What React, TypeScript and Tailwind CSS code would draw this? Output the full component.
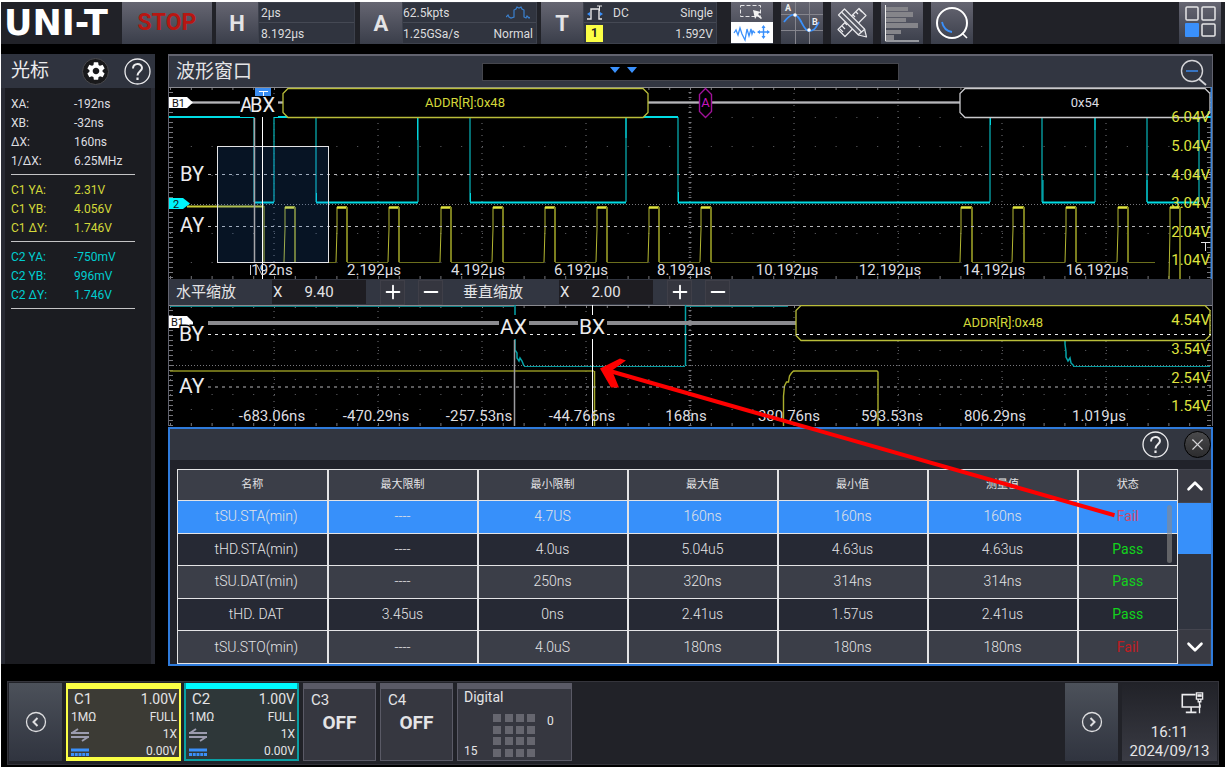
import { useState, type ReactNode } from "react";
import { ChevronDown, ChevronUp, Minus, Plus, X } from "lucide-react";
import { MdSettings } from "react-icons/md";

const GRID_X = [274, 378, 482, 586, 690, 794, 898, 1002, 1106];

const TILE = "bg-linear-to-b from-[#666672] to-[#3a3e4a]";

/* ---------- top bar ---------- */

function Setting({ letter, className, children }: { letter: string; className: string; children: ReactNode }) {
  return (
    <section className={`flex h-full ${className}`}>
      <button className={`h-full w-[42px] shrink-0 text-[22px] font-bold text-[#e4e4e6] ${TILE}`}>{letter}</button>
      <div className="grid flex-1 grid-rows-2 divide-y divide-[#454954] border border-[#3d414c] bg-[#30343f] text-xs text-[#dcdcde]">
        {children}
      </div>
    </section>
  );
}

function ToolButton({ label, children }: { label: string; children: ReactNode }) {
  return (
    <button aria-label={label} className={`h-full w-[42px] shrink-0 overflow-hidden ${TILE}`}>
      <svg viewBox="0 0 42 42" className="block h-[42px] w-[42px]" fill="none">
        {children}
      </svg>
    </button>
  );
}

function TopBar() {
  return (
    <header className="flex h-[42px] items-center bg-[#212228] pr-1">
      <h1 className="w-[121px] pl-[3px] font-['DejaVu_Sans',sans-serif] text-[35px] leading-[42px] font-bold text-white">
        UNI-T
      </h1>
      <button className={`h-full w-[90px] text-[23px] font-bold text-[#b81612] ${TILE}`}>STOP</button>
      <Setting letter="H" className="ml-1 w-[139px]">
        <p className="flex items-center px-[2px] pt-px">2µs</p>
        <p className="flex items-center px-[2px] pt-px">8.192µs</p>
      </Setting>
      <Setting letter="A" className="ml-[5px] w-[177px]">
        <p className="flex items-center justify-between pt-px pr-[2px]">
          62.5kpts
          <svg viewBox="0 0 24 14" className="mr-1 h-[14px] w-6" fill="none" stroke="#3a80cf" strokeWidth="1.200">
            <path d="M0 11l2-2 1 2 2 1 3-1V4l2-1 1-2 2 1 2-1 1 2 2 1v7l2 1 1-2 2 2 2-1" />
          </svg>
        </p>
        <p className="flex items-center justify-between pt-px pr-[3px]">
          1.25GSa/s <span>Normal</span>
        </p>
      </Setting>
      <Setting letter="T" className="ml-1 w-[176px]">
        <p className="flex items-center pt-px pr-[3px] pl-[3px]">
          <svg viewBox="0 0 16 16" className="h-4 w-4" fill="none">
            <path d="M0 14h4V4h8v10h3" stroke="#e4e4e6" strokeWidth="1.4" />
            <path d="M0 9l3-2v4zM16 9l-3-2v4z" fill="#3a90fb" />
            <path d="M10 1h5M12.500 1v5" stroke="#e4e4e6" />
          </svg>
          <span className="ml-[10px]">DC</span>
          <span className="ml-auto">Single</span>
        </p>
        <p className="flex items-center justify-between pt-px pr-[3px] pl-[2px]">
          <span className="w-[17px] bg-[#fbff45] text-center leading-[17px] font-bold text-[#222]">1</span>
          1.592V
        </p>
      </Setting>
      <nav className="ml-[14px] flex h-full gap-2">
        <ToolButton label="Select area or move waveform">
          <rect y="20" width="42" height="21" fill="#fff" />
          <rect x="9.500" y="3.500" width="20" height="11" stroke="#e4e4e6" strokeDasharray="4 2" />
          <path d="M22 8l2 9 2-3 4 3 1-1-4-4 3-2z" fill="#f2f2f2" />
          <path d="M3 31l2-3 2 5 2-7 2 6 3 6 2-11 2 7 2-7 1 5 1-3 2 2" stroke="#3a90fb" strokeWidth="1.300" />
          <path d="M27 30h11M32.500 24v12" stroke="#3a90fb" strokeWidth="1.400" />
          <path d="M26 30l3-2v4zM39 30l-3-2v4zM32.500 23l2 3h-4zM32.500 37l2-3h-4z" fill="#3a90fb" />
        </ToolButton>
        <ToolButton label="Cursors">
          <path d="M14.500 0v42M28.500 0v42M0 12.500h42M0 28.500h42" stroke="#85858d" />
          <path d="M3 20C9 12 14 11 17 15c4 4 6 14 11 14 6 0 7-4 10-9" stroke="#3a90fb" strokeWidth="1.800" />
          <circle cx="14" cy="13" r="1.800" fill="#fff" />
          <circle cx="28" cy="28" r="1.800" fill="#fff" />
          <text x="4" y="9" fontSize="9" fontWeight="700" fill="#eee">A</text>
          <text x="31" y="23" fontSize="9" fontWeight="700" fill="#eee">B</text>
        </ToolButton>
        <ToolButton label="Measure">
          <g stroke="#e9e9ec" strokeWidth="1.200" strokeLinejoin="round">
            <path d="M28 6.500l7 7-21 21-7-7z" />
            <path d="M25 10l2 2M28 7l3 3M22 13l2 2M11 24l3 3M14 21l2 2M9 27l3 3" />
            <path d="M7.500 13l6-6 20 20 2 8-8-2z" fill="#565964" />
            <path d="M10.500 10l20 20M27 33l7-6" />
          </g>
        </ToolButton>
        <ToolButton label="Statistics">
          <path d="M5 5h22v4H5zM5 10h27v5H5zM5 16h20v4H5zM5 21h32v5H5zM5 28h15v4H5zM5 33h8v5H5z" fill="#85858a" />
          <path d="M4.500 3v36H38" stroke="#f0f0f0" />
        </ToolButton>
        <ToolButton label="Search">
          <circle cx="21" cy="21" r="15" stroke="#fff" strokeWidth="2" />
          <path d="M11 20c1 5 4 9 10 10" stroke="#3a90fb" strokeWidth="1.800" />
          <path d="M31 31l5 5" stroke="#fff" strokeWidth="1.600" />
        </ToolButton>
      </nav>
      <div className="ml-auto h-full">
        <ToolButton label="Window layout">
          <g stroke="#e6e6e8" strokeWidth="1.500">
            <rect x="7" y="5" width="12" height="13" rx="1" />
            <rect x="23" y="5" width="13" height="13" rx="1" />
            <rect x="23" y="22" width="13" height="12" rx="1" />
          </g>
          <rect x="6" y="21" width="14" height="14" rx="1" fill="#3a90fb" />
        </ToolButton>
      </div>
    </header>
  );
}

/* ---------- cursor sidebar ---------- */

function HelpButton() {
  return (
    <button aria-label="Help" className="h-[27px] w-[27px] shrink-0">
      <svg viewBox="0 0 27 27" fill="none" stroke="#ececee">
        <circle cx="13.500" cy="13.500" r="12.500" strokeWidth="1.300" />
        <path d="M9 10.500c0-6 9-6 9-.5 0 3-4.500 3.500-4.500 7.500" strokeWidth="2" />
        <path d="M13.500 19.500v2.500" strokeWidth="2.200" />
      </svg>
    </button>
  );
}

const READINGS = [
  { color: "text-[#dedee0]", rows: [["XA:", "-192ns"], ["XB:", "-32ns"], ["ΔX:", "160ns"], ["1/ΔX:", "6.25MHz"]] },
  { color: "text-[#d3d83a]", rows: [["C1 YA:", "2.31V"], ["C1 YB:", "4.056V"], ["C1 ΔY:", "1.746V"]] },
  { color: "text-[#00cdd0]", rows: [["C2 YA:", "-750mV"], ["C2 YB:", "996mV"], ["C2 ΔY:", "1.746V"]] },
];

function Sidebar() {
  return (
    <aside className="mb-[2px] flex w-[154px] shrink-0 flex-col bg-[#282a33]">
      <header className="flex h-[34px] items-center bg-[#2f333e] pr-1 pl-[10px]">
        <h2 className="text-[19px] text-[#ececee]">光标</h2>
        <button
          aria-label="Cursor settings"
          className="mr-[15px] ml-auto grid h-[27px] w-[27px] place-items-center rounded-full border border-[#4a4a4e] bg-[#19191b] text-white"
        >
          <MdSettings size={22} />
        </button>
        <HelpButton />
      </header>
      <div className="mx-1 flex-1 bg-[#1b1c21] px-[6px] pt-[7px]">
        {READINGS.map((group) => (
          <dl key={group.color} className={`mb-[6px] w-[124px] border-b border-[#c4c4c6] pb-[3px] text-xs leading-[19px] ${group.color}`}>
            {group.rows.map(([name, value]) => (
              <div key={name} className="flex">
                <dt className="w-[63px]">{name}</dt>
                <dd>{value}</dd>
              </div>
            ))}
          </dl>
        ))}
      </div>
    </aside>
  );
}

/* ---------- waveforms ---------- */

function Graticule({ top, bottom, mid, rows }: { top: number; bottom: number; mid: number; rows: number[] }) {
  return (
    <g stroke="#77777c" fill="none">
      {GRID_X.map((x) => (
        <path key={x} d={`M${x} ${top}V${bottom}`} strokeDasharray="1 5" />
      ))}
      {rows.map((y) => (
        <path key={y} d={`M170 ${y}H1210`} strokeDasharray="1 19.800" stroke="#66666b" />
      ))}
      <path d={`M170 ${mid}H1210`} strokeDasharray="1 2" />
      <path d={`M690 ${top}V${bottom}`} strokeWidth="3" strokeDasharray="1 4" />
      <path d={`M171 ${top}V${bottom}M1209 ${top}V${bottom}`} strokeWidth="4" strokeDasharray="1 4" />
      <path d={`M170 ${top + 1.5}H1210M170 ${bottom - 1.5}H1210`} strokeWidth="3" strokeDasharray="1 19.800" />
      <path d={`M169 ${top + 0.5}H1212`} stroke="#8a8a90" />
    </g>
  );
}

const PULSES: [number, number][] = [
  [285, 295], [337, 347], [389, 399], [441, 451], [493, 503], [545, 555], [597, 607], [649, 659],
  [701, 711], [961, 972], [1013, 1024], [1066, 1076], [1118, 1128], [1170, 1180],
];

const CYAN_LEVELS = [
  { y: 117, spans: [[169, 254], [274, 316], [418, 470], [626, 678], [990, 1042], [1095, 1147], [1199, 1211]] },
  { y: 202.5, spans: [[254, 274], [316, 418], [470, 626], [678, 990], [1042, 1095], [1147, 1199]] },
];

const CYAN_EDGES = [254, 274, 316, 418, 470, 626, 678, 990, 1042, 1095, 1147, 1199];

const MAIN_TIMES: [number, string][] = [
  [374, "2.192µs"], [478, "4.192µs"], [581, "6.192µs"], [684, "8.192µs"],
  [787, "10.192µs"], [890, "12.192µs"], [994, "14.192µs"], [1097, "16.192µs"],
];

const MAIN_VOLTS: [number, string][] = [
  [122, "6.04V"], [151, "5.04V"], [180, "4.04V"], [208, "3.04V"], [237, "2.04V"], [265, "1.04V"],
];

function MainChart() {
  return (
    <svg viewBox="169 87 1043 192" className="block h-auto w-full bg-black" fill="none" role="img" aria-label="Main waveform">
      <Graticule top={87} bottom={279} mid={204.5} rows={[117.5, 146.5, 175.5, 233.5, 262.5]} />

      {CYAN_EDGES.map((x) => (
        <path key={x} d={`M${x} 117V202`} stroke="#06898d" strokeWidth="1.600" />
      ))}
      {CYAN_LEVELS.map((level) =>
        level.spans.map(([a, b]) => <path key={`${level.y}-${a}`} d={`M${a} ${level.y}H${b}`} stroke="#00dce4" strokeWidth="2" />),
      )}
      <path d="M316.500 193v9M470.500 193v9M678.500 192v10M417.500 118v22M626 118v20M990.500 125v-7M1095 130v-12M1043 180v22M1147 180v22" stroke="#00d4dc" />

      <path d="M187 206.500H264" stroke="#c9cd38" strokeWidth="2" />
      <path d="M264 206V262" stroke="#7b7e1e" strokeWidth="1.600" />
      {PULSES.map(([a, b], i) => {
        const foot = i === PULSES.length - 1 ? 279 : 262;
        return (
          <g key={a}>
            <path d={`M${a - 1} ${foot}L${a} 229V207`} stroke="#b4b832" />
            <path d={`M${a} 207.500H${b}`} stroke="#dfe33e" strokeWidth="2.500" />
            <path d={`M${b} 207V${foot}`} stroke="#7b7e1e" strokeWidth="2" />
          </g>
        );
      })}
      <path
        d="M295 262.500H336M347 262.500H388M399 262.500H440M451 262.500H492M503 262.500H544M555 262.500H596M607 262.500H648M659 262.500H700M711 262.500H960M972 262.500H1012M1024 262.500H1065M1076 262.500H1117M1128 262.500H1155"
        stroke="#6c6f1d"
      />

      <path d="M208 174.500H1211M208 226.500H1211" stroke="#b5b5b8" strokeDasharray="3 4" />
      <path d="M190 102.500H960" stroke="#77777b" strokeWidth="3" />
      <path d="M190 102.500H960" stroke="#b5b5b8" />

      <path d="M288 88.500H643l5 5v19l-5 5H288l-5-5v-19z" fill="#000" stroke="#b9bd3a" strokeWidth="1.300" />
      <path d="M705.500 88.500l6 6v17l-6 6-6-6v-17z" fill="#000" stroke="#a0129a" strokeWidth="1.400" />
      <path d="M965 88.500h240l5 5v19l-5 5H965l-5-5v-19z" fill="#000" stroke="#c9c9cc" strokeWidth="1.300" />
      <g fontSize="13" textAnchor="middle">
        <text x="465" y="107" fill="#d3d83a">ADDR[R]:0x48</text>
        <text x="705.500" y="107" fill="#c715bf">A</text>
        <text x="1085" y="107" fill="#dedee0">0x54</text>
      </g>

      <rect x="217.500" y="146.500" width="111" height="116" fill="#2a7fe0" fillOpacity="0.16" stroke="#e4e4e6" />
      <path d="M254.500 118V262" stroke="#a5a5a9" strokeWidth="1.500" />
      <rect x="255" y="88" width="16" height="8" fill="#3a8df2" />
      <path d="M259 91.500h9M263.500 91v5" stroke="#fff" />
      <path d="M262.500 96V279" stroke="#fff" />
      <rect x="240" y="97" width="38" height="20" fill="#000" />
      <g fill="#ececee" fontSize="20">
        <text x="240" y="112">A</text>
        <text x="250" y="112" stroke="#000" strokeWidth="2" paintOrder="stroke">BX</text>
        <text x="180" y="181">BY</text>
        <text x="180" y="232">AY</text>
      </g>

      <path d="M169 97h18l6 5.500-6 5.500H169z" fill="#fff" />
      <path d="M169 198h14l7 5.500-7 5.500H169z" fill="#00f4fa" />
      <g fontSize="11" fill="#111">
        <text x="172" y="107">B1</text>
        <text x="173" y="208">2</text>
      </g>

      <g fontSize="15" fill="#dedee0" textAnchor="middle">
        <text x="272" y="275">192ns</text>
        {MAIN_TIMES.map(([x, label]) => (
          <text key={label} x={x} y="275">{label}</text>
        ))}
      </g>
      <g fontSize="15" fill="#dfe33e" textAnchor="end">
        {MAIN_VOLTS.map(([y, label]) => (
          <text key={label} x="1210" y={y}>{label}</text>
        ))}
      </g>
      <path d="M1201 242.500h9M1205.500 242v9" stroke="#e4e4e6" />
      <path d="M250.500 265v10M257 265l5 10" stroke="#cfcfd2" />
      <path d="M1211.500 87V279" stroke="#3b86dc" strokeWidth="2" />
    </svg>
  );
}

const ZOOM_TIMES: [number, string][] = [
  [272, "-683.06ns"], [376, "-470.29ns"], [479, "-257.53ns"], [582, "-44.766ns"], [686, "168ns"],
  [789, "380.76ns"], [892, "593.53ns"], [995, "806.29ns"], [1099, "1.019µs"],
];

const ZOOM_VOLTS: [number, string][] = [[325, "4.54V"], [354, "3.54V"], [383, "2.54V"], [411, "1.54V"]];

function ZoomChart() {
  return (
    <svg viewBox="169 305 1043 121" className="block h-auto w-full bg-black" fill="none" role="img" aria-label="Zoomed waveform">
      <Graticule top={305} bottom={426} mid={365.5} rows={[350.5, 379.5, 394.5, 409.5]} />

      <path d="M170 306.500H514M686 306.500H788" stroke="#0a7e82" />
      <path d="M515 305V350l2 3v5l2 3 1-3 2 3 2 5" stroke="#06a4a9" strokeWidth="1.500" />
      <path d="M524 366.500H685M1073 366.500H1210" stroke="#06989d" />
      <path d="M685.500 366V305" stroke="#06a4a9" strokeWidth="1.500" />
      <path d="M1065 340v4l1 8v5l2 4 2-3 1 5 3 3" stroke="#06a4a9" strokeWidth="1.500" />

      <path d="M170 371H594" stroke="#8f9222" strokeWidth="1.500" />
      <path d="M594.500 371V426" stroke="#a5a92b" strokeWidth="1.500" />
      <path d="M783.500 426V396l1-10 2-4h2l1-6 2-3 2-2H877l1 1V426" stroke="#aaae2c" strokeWidth="1.400" />

      <path d="M208 323H796" stroke="#8b8b8f" strokeWidth="4" />
      <path d="M801 305.500h404l5 5v25l-5 5H801l-5-5v-25z" fill="#000" stroke="#b9bd3a" strokeWidth="1.300" />
      <path d="M208 334.500H1211" stroke="#ececee" strokeDasharray="3 4" />
      <path d="M208 387H1211" stroke="#b5b5b8" strokeDasharray="3 4" />

      <path d="M514.500 340V426" stroke="#9b9b9f" strokeWidth="1.500" />
      <path d="M592.500 305V426" stroke="#fff" />
      <path d="M499 315h30v24h-30zM578 315h29v24h-29z" fill="#000" />
      <path d="M169 316h18l6 6v6H169z" fill="#fff" />
      <text x="171" y="326" fontSize="11" fill="#111">B1</text>
      <g fill="#ececee" fontSize="21">
        <text x="500" y="334">AX</text>
        <text x="579" y="334">BX</text>
        <text x="179" y="341" stroke="#000" strokeWidth="3" paintOrder="stroke">BY</text>
        <text x="179" y="393">AY</text>
      </g>

      <text x="1003" y="327" fontSize="13" textAnchor="middle" fill="#d3d83a">ADDR[R]:0x48</text>
      <g fontSize="15" fill="#dedee0" textAnchor="middle">
        {ZOOM_TIMES.map(([x, label]) => (
          <text key={label} x={x} y="421">{label}</text>
        ))}
      </g>
      <g fontSize="15" fill="#dfe33e" textAnchor="end">
        {ZOOM_VOLTS.map(([y, label]) => (
          <text key={label} x="1210" y={y}>{label}</text>
        ))}
      </g>
    </svg>
  );
}

function ZoomControl({ label, value }: { label: string; value: string }) {
  const [text, setText] = useState(value);
  return (
    <div className="flex items-center">
      <label className="flex items-center gap-9 text-[15px] text-[#e4e4e6]">
        {label}
        <span className="flex h-6 w-[94px] items-center bg-[#1e1d22] pl-px text-[15px]">
          X
          <input
            value={text}
            onChange={(e) => setText(e.target.value)}
            className="ml-[22px] w-[60px] min-w-0 bg-transparent outline-none"
          />
        </span>
      </label>
      <button aria-label={`${label} +`} className="ml-[14px] grid h-[25px] w-[25px] place-items-center border border-[#3f3f48] bg-[#35363f] text-white">
        <Plus size={22} strokeWidth={2} />
      </button>
      <button aria-label={`${label} -`} className="ml-[13px] grid h-[25px] w-[25px] place-items-center border border-[#3f3f48] bg-[#35363f] text-white">
        <Minus size={22} strokeWidth={2} />
      </button>
    </div>
  );
}

function WaveformPanel() {
  return (
    <section className="border-x border-t-2 border-[#62636f] bg-[#323641]">
      <header className="grid h-[31px] grid-cols-[1fr_40%_1fr] items-center">
        <h2 className="pl-[7px] text-[19px] leading-[31px] text-[#e4e4e6]">波形窗口</h2>
        <div className="h-[18px] border border-[#45464d] bg-black pl-[30%]">
          <svg viewBox="0 0 29 16" className="h-4 w-[29px]" fill="#3a90fb">
            <path d="M2 3h10l-5 6zM19 3h10l-5 6z" />
          </svg>
        </div>
        <button aria-label="Zoom out" className="mr-[5px] ml-auto h-7 w-7">
          <svg viewBox="0 0 28 28" fill="none" stroke="#d5d5d8" strokeWidth="1.400">
            <circle cx="13" cy="13" r="10.500" />
            <path d="M20 21l7 6" strokeWidth="1.800" />
            <path d="M7 13h12" stroke="#3a90fb" />
          </svg>
        </button>
      </header>
      <MainChart />
      <div className="flex h-[26px] items-center gap-5 pl-[7px]">
        <ZoomControl label="水平缩放" value="9.40" />
        <ZoomControl label="垂直缩放" value="2.00" />
      </div>
      <ZoomChart />
    </section>
  );
}

/* ---------- timing table ---------- */

const COLUMNS = ["名称", "最大限制", "最小限制", "最大值", "最小值", "测量值", "状态"];

const TIMINGS = [
  ["tSU.STA(min)", "----", "4.7US", "160ns", "160ns", "160ns", "Fail"],
  ["tHD.STA(min)", "----", "4.0us", "5.04u5", "4.63us", "4.63us", "Pass"],
  ["tSU.DAT(min)", "----", "250ns", "320ns", "314ns", "314ns", "Pass"],
  ["tHD. DAT", "3.45us", "0ns", "2.41us", "1.57us", "2.41us", "Pass"],
  ["tSU.STO(min)", "----", "4.0uS", "180ns", "180ns", "180ns", "Fail"],
];

const ROW_BG = ["bg-[#3790fa]", "bg-[#262934]", "bg-[#3b3e48]", "bg-[#262934]", "bg-[#3b3e48]"];

function cellStyle(column: number, value: string, selected: boolean) {
  if (column === 0) return "pl-2 font-light";
  if (column < 6) return "font-light";
  if (value === "Pass") return "text-[#12d41c]";
  return selected ? "text-[#d0486e]" : "text-[#c01c22]";
}

function TimingPanel() {
  return (
    <section className="mt-px border-2 border-[#2f7bdb] bg-[#21222a]">
      <header className="flex h-[31px] items-center justify-end gap-[15px] bg-[#323640]">
        <HelpButton />
        <button aria-label="Close" className="grid h-[27px] w-[27px] place-items-center rounded-full border border-black bg-linear-to-b from-[#4a4a4c] to-[#2c2c2e] text-[#d5d5d8]">
          <X size={19} strokeWidth={1.4} />
        </button>
      </header>
      <div className="flex pt-[9px] pl-[7px]">
        <div className="relative flex-1">
          <table className="h-[195px] w-full table-fixed border-collapse border border-[#e4e4e6] text-center text-[#e4e4e6]">
            <colgroup>
              {COLUMNS.map((c, i) => (
                <col key={c} className={i === 6 ? "w-[10%]" : "w-[15%]"} />
              ))}
            </colgroup>
            <thead>
              <tr className="h-[31px] bg-[#3b3e48] text-[11px]">
                {COLUMNS.map((c) => (
                  <th key={c} className="border-x-2 border-b border-[#e4e4e6] p-0 font-normal first:border-l last:border-r">{c}</th>
                ))}
              </tr>
            </thead>
            <tbody>
              {TIMINGS.map((row, r) => (
                <tr key={row[0]} className={`text-[14px] ${ROW_BG[r]}`}>
                  {row.map((cell, c) => (
                    <td
                      key={c}
                      className={`border-x-2 border-y border-[#e4e4e6] py-0 first:border-l last:border-r ${cellStyle(c, cell, r === 0)}`}
                    >
                      {cell}
                    </td>
                  ))}
                </tr>
              ))}
            </tbody>
          </table>
          <span className="absolute top-9 right-[6px] h-[58px] w-[5px] rounded-full bg-[#8a8a8a]/60" />
        </div>
        <div className="flex w-[33px] flex-col bg-[#30343f] text-white">
          <button aria-label="Scroll up" className="grid h-[34px] place-items-center border border-[#44454f] bg-[#393a43]">
            <ChevronUp size={26} strokeWidth={2.4} />
          </button>
          <span className="h-[51px] bg-[#3790fa]" />
          <button aria-label="Scroll down" className="mt-auto grid h-[35px] place-items-center border border-[#44454f] bg-[#393a43]">
            <ChevronDown size={26} strokeWidth={2.4} />
          </button>
        </div>
      </div>
    </section>
  );
}

/* ---------- bottom bar ---------- */

function PageButton({ label, path }: { label: string; path: string }) {
  return (
    <button aria-label={label} className="grid w-[53px] shrink-0 place-items-center bg-linear-to-b from-[#4c515a] to-[#30343f]">
      <svg viewBox="0 0 22 22" className="h-[22px] w-[22px]" fill="none" stroke="#dedee0">
        <circle cx="11" cy="11" r="9.500" strokeWidth="1.300" />
        <path d={path} strokeWidth="2" />
      </svg>
    </button>
  );
}

function ActiveChannel({ name, frame, strip }: { name: string; frame: string; strip: string }) {
  return (
    <button className={`flex w-[115px] shrink-0 flex-col border-x-2 text-xs text-[#e4e4e6] ${frame}`}>
      <span className={`h-[6px] w-full shrink-0 ${strip}`} />
      <span className="grid w-full flex-1 grid-cols-[auto_auto] content-start justify-between pt-px pr-[2px] pl-[3px] leading-[17px]">
        <span className="pl-[3px] text-left text-[15px] leading-[19px]">{name}</span>
        <span className="text-right text-[14px] leading-[19px]">1.00V</span>
        <span className="text-left">1MΩ</span>
        <span className="text-right">FULL</span>
        <svg viewBox="0 0 18 17" className="h-[17px] w-[18px]" fill="none" stroke="#9c9caf" strokeWidth="2">
          <path d="M0 7h18M1 7l6-4M18 11H0M17 11l-6 4" />
        </svg>
        <span className="text-right">1X</span>
        <svg viewBox="0 0 18 17" className="h-[17px] w-[18px]" stroke="#3a90fb" strokeWidth="3">
          <path d="M0 7h18" />
          <path d="M0 11.500h18" strokeDasharray="3 0.750" />
        </svg>
        <span className="text-right">0.00V</span>
      </span>
    </button>
  );
}

function IdleChannel({ name }: { name: string }) {
  return (
    <button className="flex w-[73px] shrink-0 flex-col items-start border border-t-[6px] border-[#5a5a66] bg-[#363740] text-[#e4e4e6]">
      <span className="pt-px pl-[7px] text-[15px] leading-[20px]">{name}</span>
      <span className="w-full text-center text-[19px] leading-[26px] font-bold">OFF</span>
    </button>
  );
}

function BottomBar() {
  return (
    <footer className="mt-[15px] mr-[6px] mb-[3px] ml-[6px] flex h-[84px] gap-[3px] border border-[#34343b] bg-[#212228] px-px pt-px pb-[3px]">
      <PageButton label="Previous" path="M12.500 7l-4 4 4 4" />
      <ActiveChannel name="C1" frame="ml-px border-b-4 border-[#fbff45] bg-[#3c3b35]" strip="bg-[#fbff45]" />
      <ActiveChannel name="C2" frame="border-b-2 border-[#0a9fa3] bg-[#2e3739]" strip="bg-[#00faff]" />
      <div className="ml-px flex gap-1">
        <IdleChannel name="C3" />
        <IdleChannel name="C4" />
        <button className="flex w-[115px] shrink-0 flex-col items-start border border-t-[6px] border-[#5a5a66] bg-[#363740] px-[6px] text-[#e4e4e6]">
          <span className="text-[14px] leading-[17px]">Digital</span>
          <span className="flex w-full flex-1 pt-2 text-xs leading-[14px]">
            <span className="w-[29px] self-end pb-[2px] text-left">15</span>
            <svg viewBox="0 0 44 44" className="h-11 w-11" fill="#66666f">
              {[0, 12, 23, 35].map((y) => (
                <path key={y} d={`M0 ${y}h8v8H0zM12 ${y}h8v8h-8zM23 ${y}h8v8h-8zM34 ${y}h8v8h-8z`} />
              ))}
            </svg>
            <span className="pl-[10px]">0</span>
          </span>
        </button>
      </div>
      <div className="ml-auto flex gap-1">
        <PageButton label="Next" path="M9.500 7l4 4-4 4" />
        <div className="flex w-[95px] flex-col items-center bg-linear-to-b from-[#212228] to-[#3a3b44] pt-[9px] text-[15px] leading-[19px] text-[#e4e4e6]">
          <svg viewBox="0 0 26 26" className="mr-[12px] mb-2 h-[26px] w-[26px] self-end" fill="none" stroke="#ececee" strokeWidth="1.800">
            <path d="M17 3H2v14h20v-3M6 23h12M12 17v6" />
            <path d="M18 1h7v7h-7zM20 8v3h3V8M21.500 11v13" strokeWidth="1.500" />
            <path d="M19 4h5" strokeWidth="3" />
          </svg>
          <time>16:11</time>
          <time>2024/09/13</time>
        </div>
      </div>
    </footer>
  );
}

export default function App() {
  return (
    <div className="min-h-screen border-t-2 border-l border-white bg-black font-['Roboto','Noto_Sans_CJK_SC',sans-serif]">
      <TopBar />
      <div className="mt-[10px] flex gap-[13px] pr-3">
        <Sidebar />
        <main className="relative min-w-0 flex-1">
          <WaveformPanel />
          <TimingPanel />
          <svg
            viewBox="0 0 1045 611"
            preserveAspectRatio="none"
            className="pointer-events-none absolute inset-0 h-full w-full"
            fill="#fe0000"
            aria-hidden="true"
          >
            <path d="M440 316L946.500 460.500" stroke="#fe0000" strokeWidth="4" />
            <path d="M432 314l20-10 6 2-14 10 7 17h-8z" />
          </svg>
        </main>
      </div>
      <BottomBar />
    </div>
  );
}
